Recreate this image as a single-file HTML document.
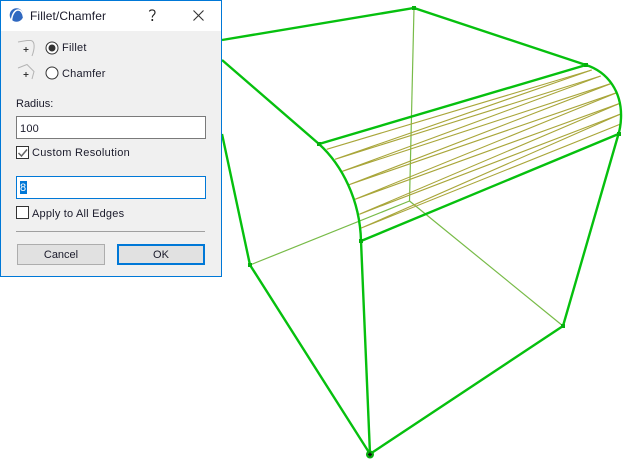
<!DOCTYPE html>
<html><head><meta charset="utf-8"><style>
html,body{margin:0;padding:0;background:#fff}
body{width:625px;height:462px;position:relative;overflow:hidden;font-family:"Liberation Sans",sans-serif;font-size:11px;color:#1a1a2a}
svg{position:absolute;left:0;top:0}
#d{position:absolute;left:0;top:0;width:220px;height:275px;border:1px solid #0078d7;background:#f0f0f0}
#t{position:absolute;left:0;top:0;width:220px;height:30px;background:#fff}
.a{position:absolute;white-space:nowrap;line-height:14px}
.i{position:absolute;box-sizing:border-box;background:#fff;border:1px solid #7a7a7a}
.b{position:absolute;box-sizing:border-box;background:#e1e1e1;text-align:center}
</style></head><body>
<svg width="625" height="462" viewBox="0 0 625 462">
<g fill="none" stroke="#78bb48" stroke-width="1.200">
<path d="M414 8L409.500 201"/>
<path d="M409.500 201L250 265"/>
<path d="M409.500 201L563 326"/>
</g>
<g fill="none" stroke="#a9a63a" stroke-width="1.100">
<path d="M326.700 149.300L591.700 70"/>
<path d="M335 159.300L591.700 70M335 159.300L600.700 76"/>
<path d="M342.300 171.300L600.700 76M342.300 171.300L611.700 83.300"/>
<path d="M348.300 185L611.700 83.300M348.300 185L616.700 92.700"/>
<path d="M355 199.300L616.700 92.700M355 199.300L620 103.300"/>
<path d="M359.300 214.300L620 103.300M359.300 214.300L620 114.300"/>
<path d="M360.700 228.300L620 114.300M360.700 228.300L620 124.300"/>
</g>
<g fill="none" stroke="#06c00e" stroke-width="2.400">
<path d="M222 40L414 8L586 65"/>
<path d="M222 60L319 144"/>
<path d="M319 144L586 65"/>
<path d="M586 65C608 72 622 92 621 118C620.800 124 620 129 618.500 134"/>
<path d="M319 144C342 165 360 200 361 241"/>
<path d="M361 241L618.500 134"/>
<path d="M618.500 134L563 326L370 454L250 265L222 134"/>
<path d="M361 241L370 454"/>
</g>
<g fill="#06b00e">
<rect x="412" y="6" width="4" height="4"/>
<rect x="584" y="63" width="4" height="4"/>
<rect x="317" y="142" width="4" height="4"/>
<rect x="617" y="132" width="4" height="4"/>
<rect x="359" y="239" width="4" height="4"/>
<rect x="248" y="263" width="4" height="4"/>
<rect x="561" y="324" width="4" height="4"/>
<circle cx="370" cy="454.500" r="4"/>
</g>
<path d="M368 454.500h4M370 452.500v4" stroke="#111" stroke-width="1.500"/>
</svg>
<div id="d">
<div id="t"></div>
<svg width="222" height="100" viewBox="0 0 222 100" style="left:-1px;top:-1px">
<circle cx="16.500" cy="15" r="6.800" fill="#2f68c0"/>
<path d="M11.500 20.500C12 14 15 10 18 10C21 10 23 13 23.500 17" fill="none" stroke="#fff" stroke-width="1.500"/>
<path d="M149.500 11.500C149.500 9.500 155 9 155 12.500C155 15 152.300 14.700 152.300 17.500" fill="none" stroke="#222" stroke-width="1.200"/>
<rect x="151.500" y="19" width="1.600" height="2" fill="#222"/>
<path d="M193.500 10.500L203.500 20.500M203.500 10.500L193.500 20.500" stroke="#333" stroke-width="1.100"/>
<g fill="none" stroke="#b4b4b4">
<path d="M18 42L27 40.500H31C35 41.500 35 48 32 56"/>
<path d="M18 68L27 64.500L34 71.500L32 79"/>
</g>
<path d="M23.500 49.500h5M26 47v5M23.500 74.500h5M26 72v5" stroke="#333"/>
<circle cx="52" cy="48" r="6" fill="#fff" stroke="#333"/>
<circle cx="52" cy="48" r="3.500" fill="#333"/>
<circle cx="52" cy="73" r="6" fill="#fff" stroke="#333"/>
</svg>
<div class="a" style="left:29px;top:8px;font-size:12px;letter-spacing:.1px">Fillet/Chamfer</div>
<div class="a" style="left:61px;top:40px;letter-spacing:.25px">Fillet</div>
<div class="a" style="left:61px;top:66px;letter-spacing:.2px">Chamfer</div>
<div class="a" style="left:15px;top:96px">Radius:</div>
<div class="i" style="left:15px;top:115px;width:190px;height:23px"></div>
<div class="a" style="left:19px;top:121px;letter-spacing:.2px">100</div>
<div class="i" style="left:15px;top:145px;width:13px;height:13px;border-color:#333"></div>
<svg width="14" height="14" viewBox="0 0 14 14" style="left:15px;top:145px"><path d="M2.500 7L5.500 10L11 3.500" fill="none" stroke="#666" stroke-width="1.500"/></svg>
<div class="a" style="left:31px;top:145px;letter-spacing:.3px">Custom Resolution</div>
<div class="i" style="left:15px;top:175px;width:190px;height:23px;border-color:#0078d7"></div>
<div style="position:absolute;left:19px;top:180px;width:7px;height:13px;background:#0078d7"></div>
<div class="a" style="left:19px;top:180px;color:#fff">8</div>
<div class="i" style="left:15px;top:205px;width:13px;height:13px;border-color:#333"></div>
<div class="a" style="left:31px;top:206px;letter-spacing:.2px">Apply to All Edges</div>
<div style="position:absolute;left:15px;top:230px;width:189px;height:1px;background:#a0a0a0"></div>
<div class="b" style="left:16px;top:243px;width:88px;height:21px;border:1px solid #adadad;line-height:21px">Cancel</div>
<div class="b" style="left:116px;top:243px;width:88px;height:21px;border:2px solid #0078d7;line-height:19px">OK</div>
</div>
</body></html>
